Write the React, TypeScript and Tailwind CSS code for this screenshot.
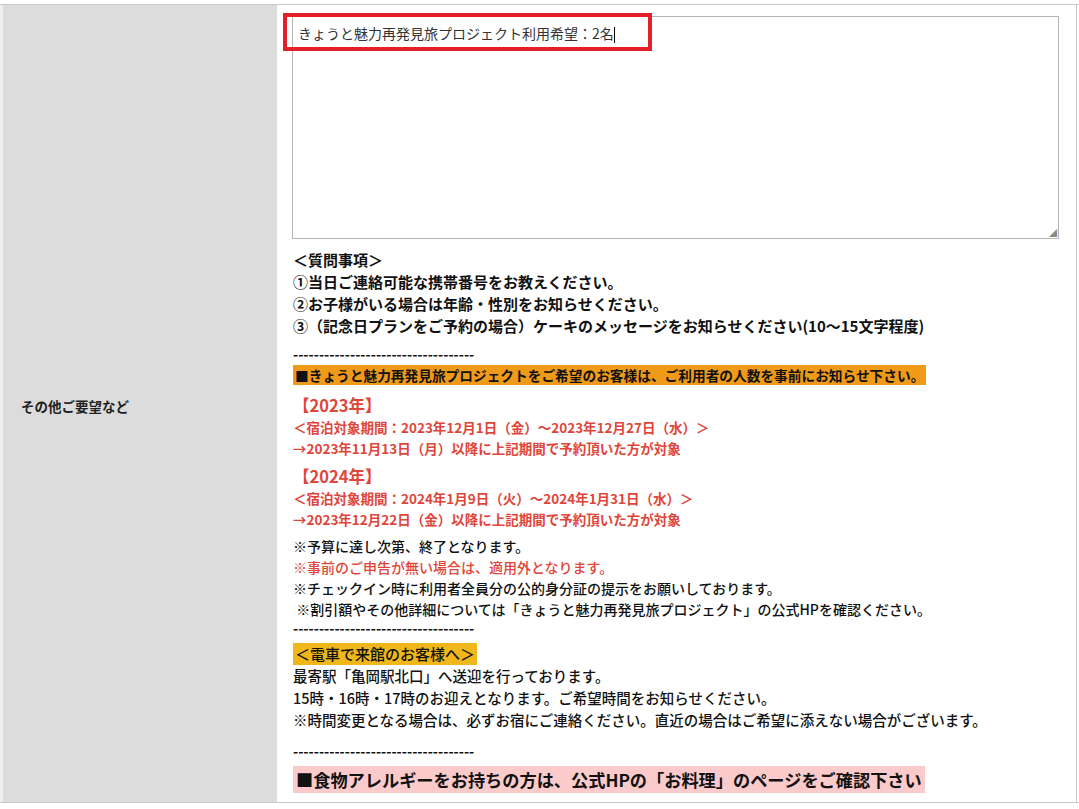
export default function App() {
  const f = { fontFamily: '"Noto Sans CJK JP", "Noto Sans", sans-serif' };
  const red = "text-[#e0453a]";
  const dash = "-----------------------------------";
  return (
    <div className="w-[1079px] h-[809px] bg-white" style={f}>
      <div className="h-[4px]" />
      <div className="flex border-t border-b border-[#c8c8c8] h-[799px]">
        <div className="w-[277px] bg-[#dcdcdc] flex items-center pl-[18px] pt-[6px] border-l-[3px] border-[#eeeeee]">
          <span className="text-[13.5px] font-bold text-[#222]">その他ご要望など</span>
        </div>
        <div className="flex-1 pl-[15px] text-[15px] leading-[22px] text-[#111] font-bold">
          <div className="relative mt-[11px] w-[767px] h-[223px] border border-[#b5b5b5] bg-white">
            <div className="absolute left-[-10px] top-[-4px] w-[369px] h-[38px] border-[4px] border-[#e3202a]" />
            <div className="absolute left-[5px] top-[5px] text-[14px] font-normal text-[#333]">
              きょうと魅力再発見旅プロジェクト利用希望：2名<span className="inline-block w-px h-[16px] bg-black align-middle" />
            </div>
            <div className="absolute right-[1px] bottom-[1px] text-[8px] leading-none text-[#888]">◢</div>
          </div>
          <div className="mt-[10px] ml-px">
            <div>＜質問事項＞</div>
            <div>①当日ご連絡可能な携帯番号をお教えください。</div>
            <div>②お子様がいる場合は年齢・性別をお知らせください。</div>
            <div>③（記念日プランをご予約の場合）ケーキのメッセージをお知らせください(10～15文字程度)</div>
            <div className="mt-[9px] leading-[16px] text-[14px]">{dash}</div>
            <div className="inline-block bg-[#f09a1a] px-[2px] leading-[20px] mt-[3px] text-[13.7px]">■きょうと魅力再発見旅プロジェクトをご希望のお客様は、ご利用者の人数を事前にお知らせ下さい。</div>
            <div className={`${red} text-[16.5px] leading-[24px] mt-[7px]`}>【2023年】</div>
            <div className={`${red} text-[13.5px] leading-[21px]`}>＜宿泊対象期間：2023年12月1日（金）～2023年12月27日（水）＞</div>
            <div className={`${red} text-[13.5px] leading-[21px]`}>→2023年11月13日（月）以降に上記期間で予約頂いた方が対象</div>
            <div className={`${red} text-[16.5px] leading-[24px] mt-[5px]`}>【2024年】</div>
            <div className={`${red} text-[13.5px] leading-[21px]`}>＜宿泊対象期間：2024年1月9日（火）～2024年1月31日（水）＞</div>
            <div className={`${red} text-[13.5px] leading-[21px]`}>→2023年12月22日（金）以降に上記期間で予約頂いた方が対象</div>
            <div className="mt-[6px] font-medium text-[14px] leading-[21px]">※予算に達し次第、終了となります。</div>
            <div className={`${red} font-medium text-[14px] leading-[21px]`}>※事前のご申告が無い場合は、適用外となります。</div>
            <div className="font-medium text-[14px] leading-[21px]">※チェックイン時に利用者全員分の公的身分証の提示をお願いしております。</div>
            <div className="font-medium text-[14px] leading-[21px]">&nbsp;※割引額やその他詳細については「きょうと魅力再発見旅プロジェクト」の公式HPを確認ください。</div>
            <div className="leading-[16px] text-[14px]">{dash}</div>
            <div className="inline-block bg-[#f0b71a] px-[2px] mt-[7px] leading-[22px] font-medium text-[15px]">＜電車で来館のお客様へ＞</div>
            <div className="font-medium text-[14.5px] leading-[22px]">最寄駅「亀岡駅北口」へ送迎を行っております。</div>
            <div className="font-medium text-[14.5px] leading-[22px]">15時・16時・17時のお迎えとなります。ご希望時間をお知らせください。</div>
            <div className="font-medium text-[14.5px] leading-[22px]">※時間変更となる場合は、必ずお宿にご連絡ください。直近の場合はご希望に添えない場合がございます。</div>
            <div className="mt-[12px] leading-[16px] text-[14px]">{dash}</div>
            <div className="inline-block bg-[#fbcaca] px-[3px] mt-[7px] leading-[27px] text-[17.2px]">■食物アレルギーをお持ちの方は、公式HPの「お料理」のページをご確認下さい</div>
          </div>
        </div>
        <div className="w-[1px] bg-[#c8c8c8] mr-[2px]" />
      </div>
    </div>
  );
}
